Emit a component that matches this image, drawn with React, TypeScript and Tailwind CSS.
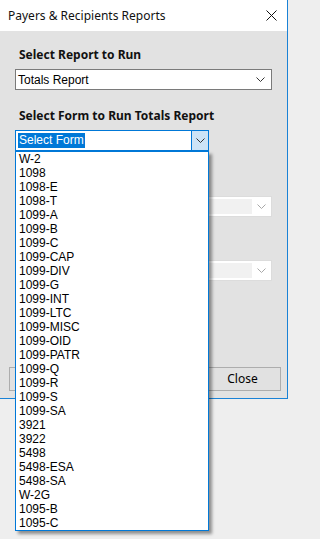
import React from 'react';

const forms = [
  'W-2', '1098', '1098-E', '1098-T', '1099-A', '1099-B', '1099-C', '1099-CAP', '1099-DIV',
  '1099-G', '1099-INT', '1099-LTC', '1099-MISC', '1099-OID', '1099-PATR', '1099-Q', '1099-R',
  '1099-S', '1099-SA', '3921', '3922', '5498', '5498-ESA', '5498-SA', 'W-2G', '1095-B', '1095-C',
];

const ui = { fontFamily: '"Noto Sans", "DejaVu Sans", sans-serif' };
const arial = { fontFamily: '"Liberation Sans", Arial, sans-serif' };

function Chevron({ color = '#333' }: { color?: string }) {
  return (
    <svg width="9" height="5" viewBox="0 0 9 5" className="block">
      <polyline points="0.5,0.5 4.5,4.5 8.5,0.5" fill="none" stroke={color} strokeWidth="1" />
    </svg>
  );
}

// greyed-out combo, mostly hidden behind the open list
function DisabledCombo() {
  return (
    <div className="flex h-[21px] w-[257px] items-center border border-[#dcdcdc] bg-white">
      <div className="ml-[2px] h-[15px] w-[234px] bg-[#f1f1f1]" />
      <div className="flex flex-1 justify-center">
        <Chevron color="#a8a8a8" />
      </div>
    </div>
  );
}

export default function App() {
  return (
    <div className="relative h-[539px] w-full overflow-hidden bg-[#eeeeee]">
      <div className="flex h-[399px] w-[288px] flex-col border-r border-b border-[#1a82d6] bg-[#e2e2e2]">
        {/* title bar */}
        <div className="flex h-[31px] items-center justify-between bg-white pl-[8px] pr-[10px]">
          <span className="text-[12px] text-[#111]" style={ui}>Payers &amp; Recipients Reports</span>
          <svg width="11" height="11" viewBox="0 0 11 11">
            <path d="M0.5 0.5 L10.5 10.5 M10.5 0.5 L0.5 10.5" stroke="#111" strokeWidth="1" />
          </svg>
        </div>

        <div className="flex flex-1 flex-col pl-[15px]">
          <div className="mt-[16px] h-[16px] pl-[4px] text-[12px] font-bold leading-[16px] text-[#111]" style={ui}>
            Select Report to Run
          </div>
          <div className="mt-[6px] flex h-[21px] w-[257px] items-center justify-between border border-[#7a7a7a] bg-white pl-[2px] pr-[6px]">
            <span className="text-[12px] text-black" style={arial}>Totals Report</span>
            <Chevron />
          </div>

          <div className="mt-[18px] h-[16px] pl-[4px] text-[12px] font-bold leading-[16px] text-[#111]" style={ui}>
            Select Form to Run Totals Report
          </div>

          {/* open combo */}
          <div className="relative z-10 mt-[6px] w-[194px]">
            <div className="flex h-[21px] items-stretch border border-[#0078d7] bg-white">
              <div className="flex flex-1 items-center pl-[2px]">
                <span className="bg-[#0078d7] px-[1px] text-[12px] leading-[15px] text-white" style={arial}>Select Form</span>
              </div>
              <div className="flex w-[17px] items-center justify-center border-l border-[#0078d7] bg-[#cce4f7]">
                <Chevron />
              </div>
            </div>
            <div className="absolute left-0 top-[21px] w-[194px] border border-[#0078d7] bg-white shadow-[3px_3px_3px_rgba(0,0,0,0.4)]">
              {forms.map((f) => (
                <div key={f} className="h-[14px] pl-[3px] text-[12px] leading-[14px] text-black" style={arial}>
                  {f}
                </div>
              ))}
            </div>
          </div>

          <div className="mt-[45px]">
            <DisabledCombo />
          </div>
          <div className="mt-[43px]">
            <DisabledCombo />
          </div>

          <div className="mt-[86px] flex justify-between pr-[6px]">
            <div className="-ml-[6px] h-[24px] w-[76px] border border-[#adadad] bg-[#e1e1e1]" />
            <div className="flex h-[24px] w-[77px] items-center justify-center border border-[#adadad] bg-[#e1e1e1] text-[12px] text-black" style={ui}>
              Close
            </div>
          </div>
        </div>
      </div>
    </div>
  );
}
